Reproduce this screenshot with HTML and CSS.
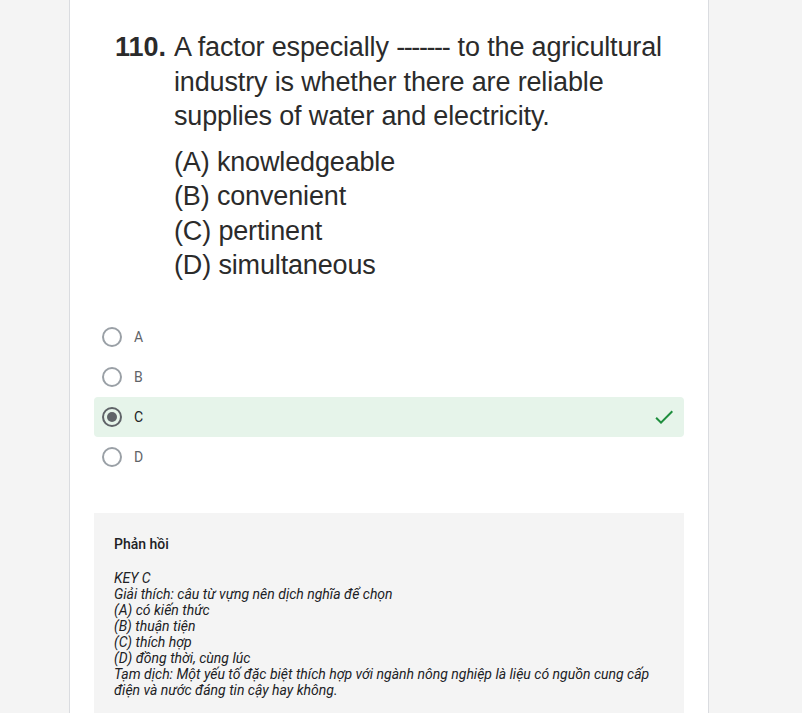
FILE: index.html
```html
<!DOCTYPE html>
<html lang="vi">
<head>
<meta charset="utf-8">
<title>Câu hỏi 110</title>
<link rel="stylesheet" href="styles.css">
</head>
<body>
<div class="card">
  <div class="question">
    <div class="q-row">
      <span class="q-num">110.</span>
      <div class="q-body">
        <div class="q-text">
          <div class="q-line">A factor especially <span class="blank">-------</span> to the agricultural</div>
          <div class="q-line">industry is whether there are reliable</div>
          <div class="q-line">supplies of water and electricity.</div>
        </div>
        <ul class="q-choices">
          <li>(A) knowledgeable</li>
          <li>(B) convenient</li>
          <li>(C) pertinent</li>
          <li>(D) simultaneous</li>
        </ul>
      </div>
    </div>
  </div>

  <div class="options">
    <div class="option">
      <span class="radio"></span>
      <span class="label">A</span>
    </div>
    <div class="option">
      <span class="radio"></span>
      <span class="label">B</span>
    </div>
    <div class="option option-correct">
      <span class="radio radio-checked"><span class="dot"></span></span>
      <span class="label label-selected">C</span>
      <svg class="check" viewBox="0 0 24 24" width="24" height="24"><path d="M9 16.17L4.83 12l-1.42 1.41L9 19 21 7l-1.41-1.41z" fill="#1e8e3e"/></svg>
    </div>
    <div class="option">
      <span class="radio"></span>
      <span class="label">D</span>
    </div>
  </div>

  <div class="feedback">
    <div class="fb-title">Phản hồi</div>
    <div class="fb-text">
      <div>KEY C</div>
      <div>Giải thích: câu từ vựng nên dịch nghĩa để chọn</div>
      <div>(A) có kiến thức</div>
      <div>(B) thuận tiện</div>
      <div>(C) thích hợp</div>
      <div>(D) đồng thời, cùng lúc</div>
      <div>Tạm dịch: Một yếu tố đặc biệt thích hợp với ngành nông nghiệp là liệu có nguồn cung cấp điện và nước đáng tin cậy hay không.</div>
    </div>
  </div>
</div>
</body>
</html>
```

FILE: styles.css
```css
html, body {
  margin: 0;
  padding: 0;
}
body {
  background: #f4f4f4;
  font-family: Roboto, "Noto Sans", Arial, sans-serif;
  color: #202124;
  overflow: hidden;
}
.card {
  width: 590px;
  margin: -20px 0 0 69px;
  padding: 20px 24px 60px;
  background: #fff;
  border: 1px solid #dadce0;
  border-radius: 8px;
}
.question {
  padding: 29px 0 0 21px;
  height: 287px;
  font-family: "Liberation Sans", Arial, sans-serif;
  color: #2b2b2b;
  font-size: 27px;
  letter-spacing: -0.15px;
  line-height: 34.5px;
}
.q-row {
  display: flex;
}
.q-num {
  font-weight: bold;
  width: 59px;
  flex: none;
  letter-spacing: 0;
}
.q-body {
  flex: 1;
}
.q-line {
  white-space: nowrap;
}
.blank {
  letter-spacing: -1.4px;
  margin-right: 1px;
}
.q-choices {
  list-style: none;
  margin: 11px 0 0;
  padding: 0;
}
.options {
  display: flex;
  flex-direction: column;
}
.option {
  display: flex;
  align-items: center;
  height: 40px;
  padding: 0 8px;
  border-radius: 4px;
}
.option-correct {
  background: #e6f4ea;
}
.radio {
  width: 16px;
  height: 16px;
  border: 2px solid #9aa0a6;
  border-radius: 50%;
  flex: none;
  display: flex;
  align-items: center;
  justify-content: center;
}
.radio-checked {
  border-color: #5f6368;
}
.dot {
  width: 10px;
  height: 10px;
  border-radius: 50%;
  background: #5f6368;
}
.label {
  margin-left: 12px;
  font-size: 14px;
  color: #5f6368;
  flex: 1;
}
.label-selected {
  color: #202124;
}
.check {
  flex: none;
}
.feedback {
  margin-top: 36px;
  background: #f4f4f4;
  padding: 21px 20px 24px;
  font-size: 14px;
}
.fb-title {
  font-weight: 500;
  line-height: 20px;
  margin-bottom: 16px;
}
.fb-text {
  font-style: italic;
  line-height: 16px;
}
```
